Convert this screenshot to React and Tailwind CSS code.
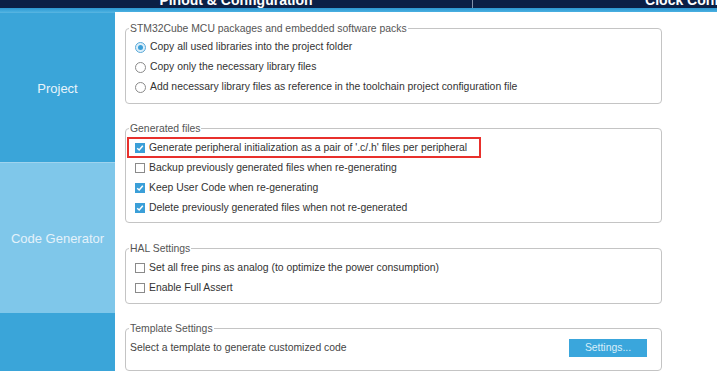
const FONT = { fontFamily: '"Liberation Sans", Arial, sans-serif' }

function Check({ checked }) {
  if (!checked) {
    return <span className="w-[10px] h-[10px] border border-[#8a8a8a] bg-white flex-shrink-0" />
  }
  return (
    <span className="w-[10px] h-[10px] bg-[#3b9fd8] flex-shrink-0 flex items-center justify-center">
      <svg width="8" height="8" viewBox="0 0 8 8">
        <path d="M1.2 4.2 L3.2 6 L6.8 1.8" fill="none" stroke="#fff" strokeWidth="1.5" />
      </svg>
    </span>
  )
}

function Radio({ checked }) {
  return (
    <span
      className={`w-[11px] h-[11px] rounded-full border flex-shrink-0 flex items-center justify-center ${
        checked ? 'border-[#5aa9d8] bg-[#dceffa]' : 'border-[#8a8a8a] bg-white'
      }`}
    >
      {checked && <span className="w-[5px] h-[5px] rounded-full bg-[#3b9fd8]" />}
    </span>
  )
}

function Row({ children, control, highlight }) {
  return (
    <div className="relative h-[20px] flex items-center gap-[4px] pl-[6px] text-[10.4px] text-[#333]">
      {control}
      <span>{children}</span>
      {highlight && (
        <span className="absolute left-[-2px] top-[-1px] w-[354px] h-[21px] border-2 border-[#e8302c]" />
      )}
    </div>
  )
}

function Group({ title, className, children }) {
  return (
    <fieldset className={`border border-[#c4c4c4] rounded-[4px] w-[537px] px-[3px] ${className}`}>
      <legend className="px-[1px] text-[10.4px] leading-[13px] text-[#555]">{title}</legend>
      {children}
    </fieldset>
  )
}

export default function App() {
  return (
    <div className="w-[717px] h-[371px] overflow-hidden bg-white flex flex-col" style={FONT}>
      {/* top tabs, mostly scrolled off */}
      <div className="h-[8px] bg-[#0b1f45] flex overflow-hidden text-white text-[14px] font-bold leading-[10px]">
        <div className="w-[473px] flex-shrink-0 text-center mt-[-5px] border-r border-[#8191ab]">Pinout &amp; Configuration</div>
        <div className="w-[478px] flex-shrink-0 text-center mt-[-5px]">Clock Configuration</div>
      </div>
      <div className="h-[4px] bg-gradient-to-b from-[#2b95cf] to-[#4ab1e2]" />

      <div className="flex flex-1 min-h-0">
        {/* sidebar */}
        <div className="w-[115px] flex-shrink-0 flex flex-col text-[13px]">
          <div className="h-[150px] pt-[3px] bg-[#3aa5d9] flex items-center justify-center text-[#e8f4fb] border-t border-[#55b3e0]">Project</div>
          <div className="h-[1px] bg-[#9fd3ee]" />
          <div className="h-[150px] pt-[2px] bg-[#7fc7ea] flex items-center justify-center text-[#e4f2fa]">Code Generator</div>
          <div className="flex-1 bg-[#3aa5d9]" />
        </div>

        {/* content */}
        <div className="flex-1 pl-[10px] pt-[10px] flex flex-col">
          <Group title="STM32Cube MCU packages and embedded software packs" className="pt-[2px] pb-[6px]">
            <Row control={<Radio checked />}>Copy all used libraries into the project folder</Row>
            <Row control={<Radio />}>Copy only the necessary library files</Row>
            <Row control={<Radio />}>Add necessary library files as reference in the toolchain project configuration file</Row>
          </Group>

          <Group title="Generated files" className="mt-[18px] pt-[3px] pb-[4px]">
            <Row control={<Check checked />} highlight>
              Generate peripheral initialization as a pair of '.c/.h' files per peripheral
            </Row>
            <Row control={<Check />}>Backup previously generated files when re-generating</Row>
            <Row control={<Check checked />}>Keep User Code when re-generating</Row>
            <Row control={<Check checked />}>Delete previously generated files when not re-generated</Row>
          </Group>

          <Group title="HAL Settings" className="mt-[19px] pt-[3px] pb-[5px]">
            <Row control={<Check />}>Set all free pins as analog (to optimize the power consumption)</Row>
            <Row control={<Check />}>Enable Full Assert</Row>
          </Group>

          <Group title="Template Settings" className="mt-[18px] h-[60px] pt-[3px]">
            <div className="h-[20px] flex items-center justify-between pl-[1px] pr-[11px] text-[10.4px] text-[#444]">
              <span>Select a template to generate customized code</span>
              <button className="w-[78px] h-[18px] bg-[#3aa6dc] text-[#d8eef9] text-[10.4px]">Settings...</button>
            </div>
          </Group>
        </div>
      </div>
    </div>
  )
}
